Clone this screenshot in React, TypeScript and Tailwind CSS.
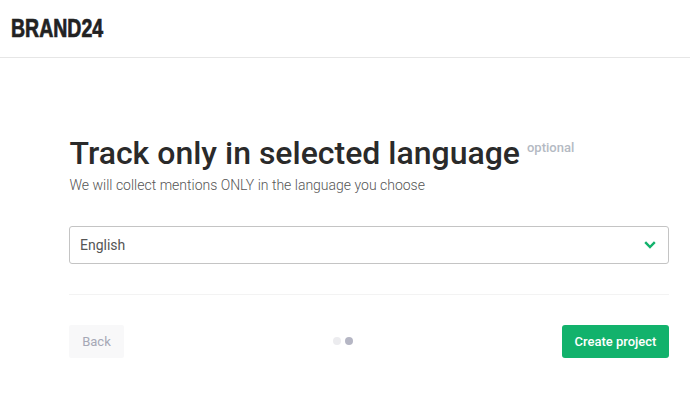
import React from "react";

const App = () => {
  return (
    <div className="h-[404px] w-[690px] overflow-hidden bg-white font-['Roboto',sans-serif]">
      <header className="flex h-[58px] items-center border-b border-[#e6e6e6] pl-[11px]">
        <span className="origin-left scale-x-[0.78] font-['Liberation_Sans',sans-serif] text-[25px] leading-none font-bold whitespace-nowrap text-[#222222] [-webkit-text-stroke:0.7px_#222222]">
          BRAND24
        </span>
      </header>

      <main className="ml-[69px] w-[600px] pt-[76px]">
        <div className="flex items-start pl-[0.5px]">
          <h1 className="text-[32px] leading-[38px] font-medium whitespace-nowrap text-[#2a2a2a]">
            Track only in selected language
          </h1>
          <span className="mt-[4px] ml-[7px] text-[13px] leading-[20px] font-medium text-[#b4bac3]">
            optional
          </span>
        </div>
        <p className="mt-[3px] pl-[0.5px] text-sm leading-[20px] font-light text-[#555555]">
          We will collect mentions ONLY in the language you choose
        </p>

        <div className="mt-[31px] flex h-[38px] items-center justify-between rounded-[3px] border border-[#c4c4c4] pr-[12px] pl-[10px]">
          <span className="mb-[1px] text-sm text-[#555555]">English</span>
          <svg width="12" height="8" viewBox="0 0 12 8" fill="none">
            <path d="M1.2 1.2 6 6l4.8-4.8" stroke="#12b26c" strokeWidth="2.4" />
          </svg>
        </div>

        <div className="mt-[30px] border-t border-[#f3f3f3]" />

        <div className="mt-[30px] flex items-center justify-between">
          <button className="h-[33px] w-[55px] rounded-[2px] bg-[#f8f8f9] text-[13px] text-[#a6a8b6]">
            Back
          </button>
          <div className="mb-[1px] flex items-center gap-[4px]">
            <span className="h-2 w-2 rounded-full bg-[#ececef]" />
            <span className="h-2 w-2 rounded-full bg-[#b5b6c4]" />
          </div>
          <button className="h-[33px] w-[107px] rounded-[3px] bg-[#12b26c] text-[13px] font-medium text-white">
            Create project
          </button>
        </div>
      </main>
    </div>
  );
};

export default App;
